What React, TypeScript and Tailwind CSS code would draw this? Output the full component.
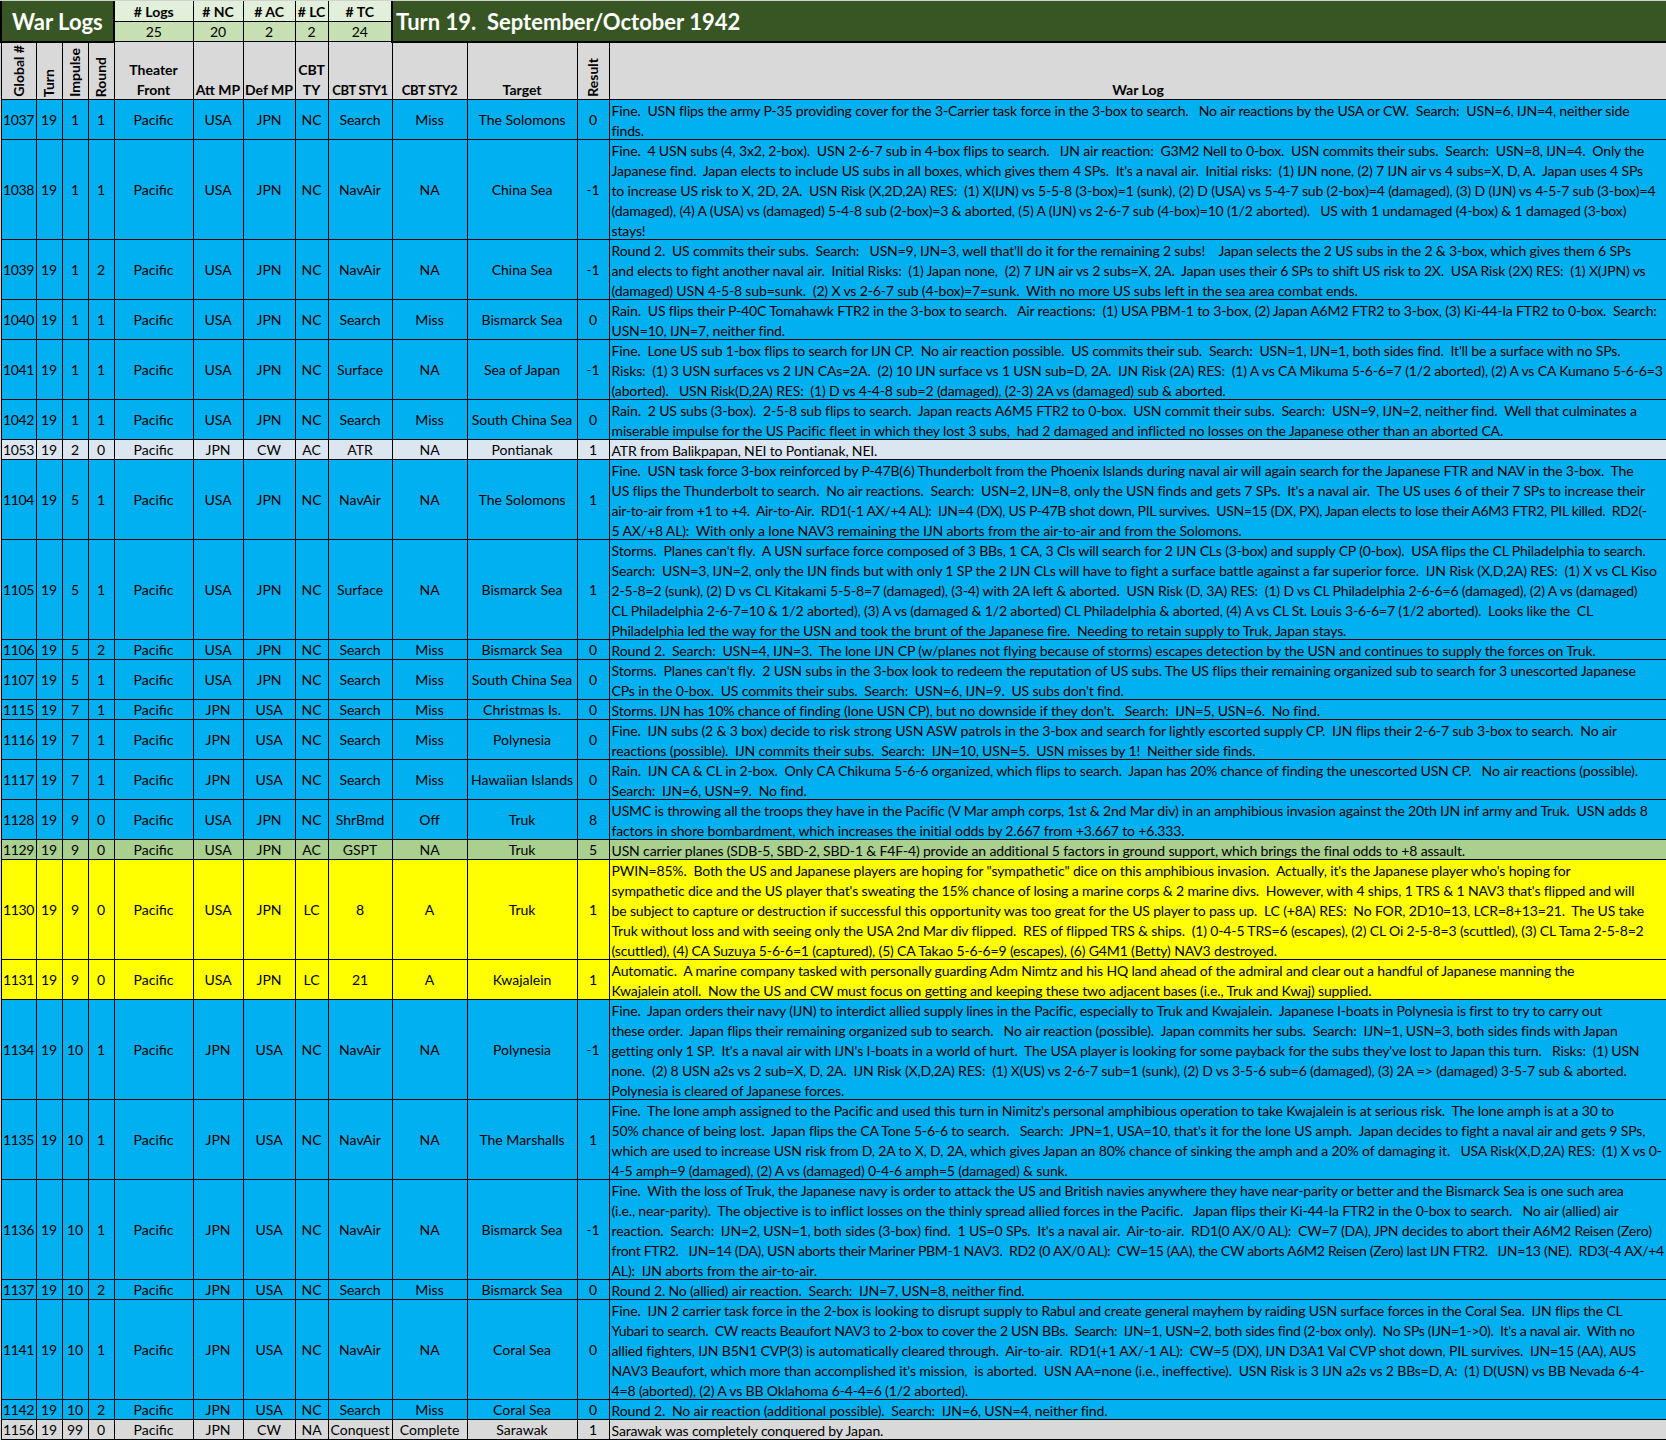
const LOG_FONT = "font-['Lato','Carlito',sans-serif]";

type Row = {
  id: number;
  impulse: number;
  round: number;
  att: string;
  def: string;
  ty: string;
  sty1: string;
  sty2: string;
  target: string;
  result: number;
  bg: string;
  lines: string[];
};

const BLUE = "bg-[#00b0f0]";
const YELLOW = "bg-[#ffff00]";

const rows: Row[] = [
  { id: 1037, impulse: 1, round: 1, att: "USA", def: "JPN", ty: "NC", sty1: "Search", sty2: "Miss", target: "The Solomons", result: 0, bg: BLUE, lines: [
    "Fine.  USN flips the army P-35 providing cover for the 3-Carrier task force in the 3-box to search.   No air reactions by the USA or CW.  Search:  USN=6, IJN=4, neither side",
    "finds.",
  ] },
  { id: 1038, impulse: 1, round: 1, att: "USA", def: "JPN", ty: "NC", sty1: "NavAir", sty2: "NA", target: "China Sea", result: -1, bg: BLUE, lines: [
    "Fine.  4 USN subs (4, 3x2, 2-box).  USN 2-6-7 sub in 4-box flips to search.   IJN air reaction:  G3M2 Nell to 0-box.  USN commits their subs.  Search:  USN=8, IJN=4.  Only the",
    "Japanese find.  Japan elects to include US subs in all boxes, which gives them 4 SPs.  It's a naval air.  Initial risks:  (1) IJN none, (2) 7 IJN air vs 4 subs=X, D, A.  Japan uses 4 SPs",
    "to increase US risk to X, 2D, 2A.  USN Risk (X,2D,2A) RES:  (1) X(IJN) vs 5-5-8 (3-box)=1 (sunk), (2) D (USA) vs 5-4-7 sub (2-box)=4 (damaged), (3) D (IJN) vs 4-5-7 sub (3-box)=4",
    "(damaged), (4) A (USA) vs (damaged) 5-4-8 sub (2-box)=3 & aborted, (5) A (IJN) vs 2-6-7 sub (4-box)=10 (1/2 aborted).   US with 1 undamaged (4-box) & 1 damaged (3-box)",
    "stays!",
  ] },
  { id: 1039, impulse: 1, round: 2, att: "USA", def: "JPN", ty: "NC", sty1: "NavAir", sty2: "NA", target: "China Sea", result: -1, bg: BLUE, lines: [
    "Round 2.  US commits their subs.  Search:   USN=9, IJN=3, well that'll do it for the remaining 2 subs!    Japan selects the 2 US subs in the 2 & 3-box, which gives them 6 SPs",
    "and elects to fight another naval air.  Initial Risks:  (1) Japan none,  (2) 7 IJN air vs 2 subs=X, 2A.  Japan uses their 6 SPs to shift US risk to 2X.  USA Risk (2X) RES:  (1) X(JPN) vs",
    "(damaged) USN 4-5-8 sub=sunk.  (2) X vs 2-6-7 sub (4-box)=7=sunk.  With no more US subs left in the sea area combat ends.",
  ] },
  { id: 1040, impulse: 1, round: 1, att: "USA", def: "JPN", ty: "NC", sty1: "Search", sty2: "Miss", target: "Bismarck Sea", result: 0, bg: BLUE, lines: [
    "Rain.  US flips their P-40C Tomahawk FTR2 in the 3-box to search.   Air reactions:  (1) USA PBM-1 to 3-box, (2) Japan A6M2 FTR2 to 3-box, (3) Ki-44-Ia FTR2 to 0-box.  Search:",
    "USN=10, IJN=7, neither find.",
  ] },
  { id: 1041, impulse: 1, round: 1, att: "USA", def: "JPN", ty: "NC", sty1: "Surface", sty2: "NA", target: "Sea of Japan", result: -1, bg: BLUE, lines: [
    "Fine.  Lone US sub 1-box flips to search for IJN CP.  No air reaction possible.  US commits their sub.  Search:  USN=1, IJN=1, both sides find.  It'll be a surface with no SPs.",
    "Risks:  (1) 3 USN surfaces vs 2 IJN CAs=2A.  (2) 10 IJN surface vs 1 USN sub=D, 2A.  IJN Risk (2A) RES:  (1) A vs CA Mikuma 5-6-6=7 (1/2 aborted), (2) A vs CA Kumano 5-6-6=3",
    "(aborted).   USN Risk(D,2A) RES:  (1) D vs 4-4-8 sub=2 (damaged), (2-3) 2A vs (damaged) sub & aborted.",
  ] },
  { id: 1042, impulse: 1, round: 1, att: "USA", def: "JPN", ty: "NC", sty1: "Search", sty2: "Miss", target: "South China Sea", result: 0, bg: BLUE, lines: [
    "Rain.  2 US subs (3-box).  2-5-8 sub flips to search.  Japan reacts A6M5 FTR2 to 0-box.  USN commit their subs.  Search:  USN=9, IJN=2, neither find.  Well that culminates a",
    "miserable impulse for the US Pacific fleet in which they lost 3 subs,  had 2 damaged and inflicted no losses on the Japanese other than an aborted CA.",
  ] },
  { id: 1053, impulse: 2, round: 0, att: "JPN", def: "CW", ty: "AC", sty1: "ATR", sty2: "NA", target: "Pontianak", result: 1, bg: "bg-[#dce6f1]", lines: [
    "ATR from Balikpapan, NEI to Pontianak, NEI.",
  ] },
  { id: 1104, impulse: 5, round: 1, att: "USA", def: "JPN", ty: "NC", sty1: "NavAir", sty2: "NA", target: "The Solomons", result: 1, bg: BLUE, lines: [
    "Fine.  USN task force 3-box reinforced by P-47B(6) Thunderbolt from the Phoenix Islands during naval air will again search for the Japanese FTR and NAV in the 3-box.  The",
    "US flips the Thunderbolt to search.  No air reactions.  Search:  USN=2, IJN=8, only the USN finds and gets 7 SPs.  It's a naval air.  The US uses 6 of their 7 SPs to increase their",
    "air-to-air from +1 to +4.  Air-to-Air.  RD1(-1 AX/+4 AL):  IJN=4 (DX), US P-47B shot down, PIL survives.  USN=15 (DX, PX), Japan elects to lose their A6M3 FTR2, PIL killed.  RD2(-",
    "5 AX/+8 AL):  With only a lone NAV3 remaining the IJN aborts from the air-to-air and from the Solomons.",
  ] },
  { id: 1105, impulse: 5, round: 1, att: "USA", def: "JPN", ty: "NC", sty1: "Surface", sty2: "NA", target: "Bismarck Sea", result: 1, bg: BLUE, lines: [
    "Storms.  Planes can't fly.  A USN surface force composed of 3 BBs, 1 CA, 3 Cls will search for 2 IJN CLs (3-box) and supply CP (0-box).  USA flips the CL Philadelphia to search.",
    "Search:  USN=3, IJN=2, only the IJN finds but with only 1 SP the 2 IJN CLs will have to fight a surface battle against a far superior force.  IJN Risk (X,D,2A) RES:  (1) X vs CL Kiso",
    "2-5-8=2 (sunk), (2) D vs CL Kitakami 5-5-8=7 (damaged), (3-4) with 2A left & aborted.  USN Risk (D, 3A) RES:  (1) D vs CL Philadelphia 2-6-6=6 (damaged), (2) A vs (damaged)",
    "CL Philadelphia 2-6-7=10 & 1/2 aborted), (3) A vs (damaged & 1/2 aborted) CL Philadelphia & aborted, (4) A vs CL St. Louis 3-6-6=7 (1/2 aborted).  Looks like the  CL",
    "Philadelphia led the way for the USN and took the brunt of the Japanese fire.  Needing to retain supply to Truk, Japan stays.",
  ] },
  { id: 1106, impulse: 5, round: 2, att: "USA", def: "JPN", ty: "NC", sty1: "Search", sty2: "Miss", target: "Bismarck Sea", result: 0, bg: BLUE, lines: [
    "Round 2.  Search:  USN=4, IJN=3.  The lone IJN CP (w/planes not flying because of storms) escapes detection by the USN and continues to supply the forces on Truk.",
  ] },
  { id: 1107, impulse: 5, round: 1, att: "USA", def: "JPN", ty: "NC", sty1: "Search", sty2: "Miss", target: "South China Sea", result: 0, bg: BLUE, lines: [
    "Storms.  Planes can't fly.  2 USN subs in the 3-box look to redeem the reputation of US subs. The US flips their remaining organized sub to search for 3 unescorted Japanese",
    "CPs in the 0-box.  US commits their subs.  Search:  USN=6, IJN=9.  US subs don't find.",
  ] },
  { id: 1115, impulse: 7, round: 1, att: "JPN", def: "USA", ty: "NC", sty1: "Search", sty2: "Miss", target: "Christmas Is.", result: 0, bg: BLUE, lines: [
    "Storms. IJN has 10% chance of finding (lone USN CP), but no downside if they don't.   Search:  IJN=5, USN=6.  No find.",
  ] },
  { id: 1116, impulse: 7, round: 1, att: "JPN", def: "USA", ty: "NC", sty1: "Search", sty2: "Miss", target: "Polynesia", result: 0, bg: BLUE, lines: [
    "Fine.  IJN subs (2 & 3 box) decide to risk strong USN ASW patrols in the 3-box and search for lightly escorted supply CP.  IJN flips their 2-6-7 sub 3-box to search.  No air",
    "reactions (possible).  IJN commits their subs.  Search:  IJN=10, USN=5.  USN misses by 1!  Neither side finds.",
  ] },
  { id: 1117, impulse: 7, round: 1, att: "JPN", def: "USA", ty: "NC", sty1: "Search", sty2: "Miss", target: "Hawaiian Islands", result: 0, bg: BLUE, lines: [
    "Rain.  IJN CA & CL in 2-box.  Only CA Chikuma 5-6-6 organized, which flips to search.  Japan has 20% chance of finding the unescorted USN CP.   No air reactions (possible).",
    "Search:  IJN=6, USN=9.  No find.",
  ] },
  { id: 1128, impulse: 9, round: 0, att: "USA", def: "JPN", ty: "NC", sty1: "ShrBmd", sty2: "Off", target: "Truk", result: 8, bg: BLUE, lines: [
    "USMC is throwing all the troops they have in the Pacific (V Mar amph corps, 1st & 2nd Mar div) in an amphibious invasion against the 20th IJN inf army and Truk.  USN adds 8",
    "factors in shore bombardment, which increases the initial odds by 2.667 from +3.667 to +6.333.",
  ] },
  { id: 1129, impulse: 9, round: 0, att: "USA", def: "JPN", ty: "AC", sty1: "GSPT", sty2: "NA", target: "Truk", result: 5, bg: "bg-[#a9d08e]", lines: [
    "USN carrier planes (SDB-5, SBD-2, SBD-1 & F4F-4) provide an additional 5 factors in ground support, which brings the final odds to +8 assault.",
  ] },
  { id: 1130, impulse: 9, round: 0, att: "USA", def: "JPN", ty: "LC", sty1: "8", sty2: "A", target: "Truk", result: 1, bg: YELLOW, lines: [
    "PWIN=85%.  Both the US and Japanese players are hoping for \"sympathetic\" dice on this amphibious invasion.  Actually, it's the Japanese player who's hoping for",
    "sympathetic dice and the US player that's sweating the 15% chance of losing a marine corps & 2 marine divs.  However, with 4 ships, 1 TRS & 1 NAV3 that's flipped and will",
    "be subject to capture or destruction if successful this opportunity was too great for the US player to pass up.  LC (+8A) RES:  No FOR, 2D10=13, LCR=8+13=21.  The US take",
    "Truk without loss and with seeing only the USA 2nd Mar div flipped.  RES of flipped TRS & ships.  (1) 0-4-5 TRS=6 (escapes), (2) CL Oi 2-5-8=3 (scuttled), (3) CL Tama 2-5-8=2",
    "(scuttled), (4) CA Suzuya 5-6-6=1 (captured), (5) CA Takao 5-6-6=9 (escapes), (6) G4M1 (Betty) NAV3 destroyed.",
  ] },
  { id: 1131, impulse: 9, round: 0, att: "USA", def: "JPN", ty: "LC", sty1: "21", sty2: "A", target: "Kwajalein", result: 1, bg: YELLOW, lines: [
    "Automatic.  A marine company tasked with personally guarding Adm Nimtz and his HQ land ahead of the admiral and clear out a handful of Japanese manning the",
    "Kwajalein atoll.  Now the US and CW must focus on getting and keeping these two adjacent bases (i.e., Truk and Kwaj) supplied.",
  ] },
  { id: 1134, impulse: 10, round: 1, att: "JPN", def: "USA", ty: "NC", sty1: "NavAir", sty2: "NA", target: "Polynesia", result: -1, bg: BLUE, lines: [
    "Fine.  Japan orders their navy (IJN) to interdict allied supply lines in the Pacific, especially to Truk and Kwajalein.  Japanese I-boats in Polynesia is first to try to carry out",
    "these order.  Japan flips their remaining organized sub to search.   No air reaction (possible).  Japan commits her subs.  Search:  IJN=1, USN=3, both sides finds with Japan",
    "getting only 1 SP.  It's a naval air with IJN's I-boats in a world of hurt.  The USA player is looking for some payback for the subs they've lost to Japan this turn.   Risks:  (1) USN",
    "none.  (2) 8 USN a2s vs 2 sub=X, D, 2A.  IJN Risk (X,D,2A) RES:  (1) X(US) vs 2-6-7 sub=1 (sunk), (2) D vs 3-5-6 sub=6 (damaged), (3) 2A => (damaged) 3-5-7 sub & aborted.",
    "Polynesia is cleared of Japanese forces.",
  ] },
  { id: 1135, impulse: 10, round: 1, att: "JPN", def: "USA", ty: "NC", sty1: "NavAir", sty2: "NA", target: "The Marshalls", result: 1, bg: BLUE, lines: [
    "Fine.  The lone amph assigned to the Pacific and used this turn in Nimitz's personal amphibious operation to take Kwajalein is at serious risk.  The lone amph is at a 30 to",
    "50% chance of being lost.  Japan flips the CA Tone 5-6-6 to search.   Search:  JPN=1, USA=10, that's it for the lone US amph.  Japan decides to fight a naval air and gets 9 SPs,",
    "which are used to increase USN risk from D, 2A to X, D, 2A, which gives Japan an 80% chance of sinking the amph and a 20% of damaging it.   USA Risk(X,D,2A) RES:  (1) X vs 0-",
    "4-5 amph=9 (damaged), (2) A vs (damaged) 0-4-6 amph=5 (damaged) & sunk.",
  ] },
  { id: 1136, impulse: 10, round: 1, att: "JPN", def: "USA", ty: "NC", sty1: "NavAir", sty2: "NA", target: "Bismarck Sea", result: -1, bg: BLUE, lines: [
    "Fine.  With the loss of Truk, the Japanese navy is order to attack the US and British navies anywhere they have near-parity or better and the Bismarck Sea is one such area",
    "(i.e., near-parity).  The objective is to inflict losses on the thinly spread allied forces in the Pacific.   Japan flips their Ki-44-Ia FTR2 in the 0-box to search.   No air (allied) air",
    "reaction.  Search:  IJN=2, USN=1, both sides (3-box) find.  1 US=0 SPs.  It's a naval air.  Air-to-air.  RD1(0 AX/0 AL):  CW=7 (DA), JPN decides to abort their A6M2 Reisen (Zero)",
    "front FTR2.   IJN=14 (DA), USN aborts their Mariner PBM-1 NAV3.  RD2 (0 AX/0 AL):  CW=15 (AA), the CW aborts A6M2 Reisen (Zero) last IJN FTR2.   IJN=13 (NE).  RD3(-4 AX/+4",
    "AL):  IJN aborts from the air-to-air.",
  ] },
  { id: 1137, impulse: 10, round: 2, att: "JPN", def: "USA", ty: "NC", sty1: "Search", sty2: "Miss", target: "Bismarck Sea", result: 0, bg: BLUE, lines: [
    "Round 2. No (allied) air reaction.  Search:  IJN=7, USN=8, neither find.",
  ] },
  { id: 1141, impulse: 10, round: 1, att: "JPN", def: "USA", ty: "NC", sty1: "NavAir", sty2: "NA", target: "Coral Sea", result: 0, bg: BLUE, lines: [
    "Fine.  IJN 2 carrier task force in the 2-box is looking to disrupt supply to Rabul and create general mayhem by raiding USN surface forces in the Coral Sea.  IJN flips the CL",
    "Yubari to search.  CW reacts Beaufort NAV3 to 2-box to cover the 2 USN BBs.  Search:  IJN=1, USN=2, both sides find (2-box only).  No SPs (IJN=1->0).  It's a naval air.  With no",
    "allied fighters, IJN B5N1 CVP(3) is automatically cleared through.  Air-to-air.  RD1(+1 AX/-1 AL):  CW=5 (DX), IJN D3A1 Val CVP shot down, PIL survives.  IJN=15 (AA), AUS",
    "NAV3 Beaufort, which more than accomplished it's mission,  is aborted.  USN AA=none (i.e., ineffective).  USN Risk is 3 IJN a2s vs 2 BBs=D, A:  (1) D(USN) vs BB Nevada 6-4-",
    "4=8 (aborted), (2) A vs BB Oklahoma 6-4-4=6 (1/2 aborted).",
  ] },
  { id: 1142, impulse: 10, round: 2, att: "JPN", def: "USA", ty: "NC", sty1: "Search", sty2: "Miss", target: "Coral Sea", result: 0, bg: BLUE, lines: [
    "Round 2.  No air reaction (additional possible).  Search:  IJN=6, USN=4, neither find.",
  ] },
  { id: 1156, impulse: 99, round: 0, att: "JPN", def: "CW", ty: "NA", sty1: "Conquest", sty2: "Complete", target: "Sarawak", result: 1, bg: "bg-[#d9d9d9]", lines: [
    "Sarawak was completely conquered by Japan.",
  ] },
];

const colWidths = [35, 26, 26, 26, 79, 50, 52, 33, 64, 75, 110, 32, 1058];

// these lines run wider in Lato than in the original, squeeze them to stay in the cell
const isLongLine = (line: string) =>
  line.endsWith("RD2(-") || line.endsWith("RD3(-4 AX/+4") || line.endsWith("With no");

const Cell = ({ children, tight }: { children: React.ReactNode; tight?: boolean }) => (
  <td className={`border border-black text-center align-middle whitespace-nowrap p-0 leading-[19px] ${tight ? "tracking-[-0.4px]" : ""}`}>{children}</td>
);

const RotHead = ({ children }: { children: string }) => (
  <th className="border border-black bg-[#d9d9d9] p-0 align-bottom font-bold">
    <div className="flex justify-center">
      <span className="pt-[2px] leading-[20px] whitespace-nowrap [writing-mode:vertical-rl] rotate-180">{children}</span>
    </div>
  </th>
);

const Head = ({ children, small }: { children: React.ReactNode; small?: boolean }) => (
  <th className={`border border-black bg-[#d9d9d9] p-0 align-bottom font-bold leading-[20px] text-center whitespace-nowrap ${small ? "text-[13px] tracking-[-0.4px]" : ""}`}>
    <div className="-mb-px">{children}</div>
  </th>
);

const Stat = ({ children, tone }: { children: React.ReactNode; tone: string }) => (
  <td className={`border border-black p-0 text-center leading-[18px] whitespace-nowrap ${tone}`}>{children}</td>
);

export default function App() {
  return (
    <div className={`w-[1666px] bg-[#d0d0d0] pt-[1px] text-[14px] text-black ${LOG_FONT}`}>
      <table className="w-[1666px] table-fixed border-collapse">
        <colgroup>
          {colWidths.map((w, i) => (
            <col key={i} style={{ width: w }} />
          ))}
        </colgroup>
        <tbody>
          <tr className="h-[20px]">
            <td colSpan={4} rowSpan={2} className="border-2 border-t-0 border-black bg-[#375623] pl-[10px] pt-[2px] text-[22px] font-bold leading-none text-white">
              War Logs
            </td>
            <Stat tone="border-t-0 pt-[2px] bg-[#e2efda] font-bold">
              # Logs
            </Stat>
            <Stat tone="border-t-0 pt-[2px] bg-[#e2efda] font-bold">
              # NC
            </Stat>
            <Stat tone="border-t-0 pt-[2px] bg-[#e2efda] font-bold">
              # AC
            </Stat>
            <Stat tone="border-t-0 pt-[2px] bg-[#e2efda] font-bold">
              # LC
            </Stat>
            <Stat tone="border-t-0 pt-[2px] bg-[#e2efda] font-bold">
              # TC
            </Stat>
            <td colSpan={4} rowSpan={2} className="border-2 border-t-0 border-black bg-[#375623] pl-[3px] pt-[2px] text-[22px] font-bold leading-none whitespace-pre text-white">
              {"Turn 19.  September/October 1942"}
            </td>
          </tr>
          <tr className="h-[20px]">
            <Stat tone="bg-[#c6e0b4]">25</Stat>
            <Stat tone="bg-[#c6e0b4]">20</Stat>
            <Stat tone="bg-[#c6e0b4]">2</Stat>
            <Stat tone="bg-[#c6e0b4]">2</Stat>
            <Stat tone="bg-[#c6e0b4]">24</Stat>
          </tr>
          <tr className="h-[58px]">
            <RotHead>Global #</RotHead>
            <RotHead>Turn</RotHead>
            <RotHead>Impulse</RotHead>
            <RotHead>Round</RotHead>
            <Head>
              Theater
              <br />
              Front
            </Head>
            <Head>Att MP</Head>
            <Head>Def MP</Head>
            <Head>
              CBT
              <br />
              TY
            </Head>
            <Head small>CBT STY1</Head>
            <Head small>CBT STY2</Head>
            <Head>Target</Head>
            <RotHead>Result</RotHead>
            <Head>War Log</Head>
          </tr>
          {rows.map((r) => (
            <tr key={r.id} className={r.bg}>
              <Cell tight>{r.id}</Cell>
              <Cell>19</Cell>
              <Cell>{r.impulse}</Cell>
              <Cell>{r.round}</Cell>
              <Cell>Pacific</Cell>
              <Cell>{r.att}</Cell>
              <Cell>{r.def}</Cell>
              <Cell>{r.ty}</Cell>
              <Cell>{r.sty1}</Cell>
              <Cell>{r.sty2}</Cell>
              <Cell>{r.target}</Cell>
              <Cell>{r.result}</Cell>
              <td className="border border-black p-0 pl-[2px] align-top leading-[20px]">
                <div className="pt-[1px]" style={{ height: r.lines.length * 20 - 1 }}>
                  {r.lines.map((line, i) => (
                    <div key={i} className={`h-[20px] whitespace-pre ${isLongLine(line) ? "tracking-[-0.3px]" : "tracking-[-0.15px]"}`}>
                      {line}
                    </div>
                  ))}
                </div>
              </td>
            </tr>
          ))}
        </tbody>
      </table>
    </div>
  );
}
